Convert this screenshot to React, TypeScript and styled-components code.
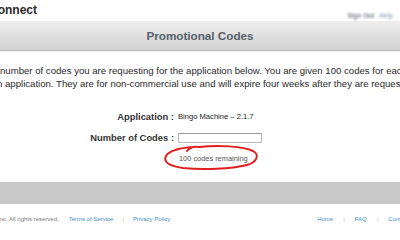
import React from 'react'
import styled, { createGlobalStyle } from 'styled-components'

const GlobalStyle = createGlobalStyle`
  html, body {
    margin: 0;
    padding: 0;
    background: #ffffff;
    overflow: hidden;
  }
  body {
    width: 400px;
    height: 240px;
    font-family: "Liberation Sans", Arial, sans-serif;
    color: #222;
  }
`

const Page = styled.div`
  display: flex;
  flex-direction: column;
  width: 400px;
  height: 240px;
  overflow: hidden;
`

const TopBar = styled.div`
  height: 21px;
  display: flex;
  align-items: center;
  justify-content: space-between;
`

const Brand = styled.div`
  margin-left: -11px;
  margin-top: -2px;
  font-size: 12px;
  font-weight: bold;
  color: #2b2b2b;
`

const UserLinks = styled.div`
  display: flex;
  gap: 5px;
  margin-right: 7px;
  margin-top: 9px;
  font-size: 6.4px;
  filter: blur(0.8px);
`

const UserLink = styled.span<{ tone: string }>`
  color: ${(p) => p.tone};
  font-weight: bold;
`

const Header = styled.div`
  height: 29px;
  display: flex;
  align-items: center;
  justify-content: center;
  background: linear-gradient(#eeeeee, #d2d2d2);
  border-bottom: 1px solid #bcbcbc;
  box-shadow: 0 1px 0 #f4f4f4;
`

const Title = styled.h1`
  margin: 0;
  font-size: 11.7px;
  font-weight: bold;
  color: #56606a;
`

const Intro = styled.div`
  padding-top: 13px;
  font-size: 9.6px;
  line-height: 13px;
  color: #2a2a2a;
`

const IntroLine = styled.div<{ shift: number }>`
  white-space: nowrap;
  margin-left: ${(p) => p.shift}px;
`

const Form = styled.div`
  margin-top: 20px;
  display: grid;
  grid-template-columns: 174px 1fr;
  column-gap: 4px;
  grid-auto-rows: 13px;
  row-gap: 8px;
  align-items: center;
`

const Label = styled.div`
  text-align: right;
  font-size: 9.4px;
  font-weight: bold;
  color: #333;
  white-space: nowrap;
`

const Value = styled.div`
  font-size: 7.6px;
  color: #222;
`

const CodeInput = styled.input`
  box-sizing: border-box;
  width: 84px;
  height: 10px;
  margin: 0;
  padding: 0;
  border: 1px solid #b9b9b9;
  border-top-color: #9a9a9a;
  background: #fff;
`

const Remaining = styled.div`
  position: relative;
  font-size: 7.4px;
  color: #555;
  padding-left: 1px;
`

const Circle = styled.svg`
  position: absolute;
  left: -15px;
  top: -10px;
  overflow: visible;
`

const Band = styled.div`
  margin-top: 17px;
  height: 22px;
  background: #c9c9c9;
`

const Footer = styled.div`
  flex: 1;
  display: flex;
  align-items: center;
  padding-bottom: 6px;
  font-size: 6px;
`

const FooterGroup = styled.div<{ end?: boolean }>`
  display: flex;
  align-items: center;
  margin-left: ${(p) => (p.end ? 'auto' : '0')};
  margin-right: ${(p) => (p.end ? '-18px' : '0')};
`

const Copy = styled.span`
  margin-left: -2px;
  margin-right: 10px;
  color: #7a7a7a;
`

const FootLink = styled.a`
  color: #3d8ed2;
  text-decoration: none;
  white-space: nowrap;
`

const Sep = styled.span<{ space: number }>`
  color: #c6c6c6;
  margin: 0 ${(p) => p.space}px;
`

export default function App() {
  return (
    <Page>
      <GlobalStyle />
      <TopBar>
        <Brand>Connect</Brand>
        <UserLinks>
          <UserLink tone="#7d8088">Sign Out</UserLink>
          <UserLink tone="#a8b0c8">Help</UserLink>
        </UserLinks>
      </TopBar>
      <Header>
        <Title>Promotional Codes</Title>
      </Header>
      <Intro>
        <IntroLine shift={0}>
          number of codes you are requesting for the application below. You are given 100 codes for each
        </IntroLine>
        <IntroLine shift={-3}>
          n application. They are for non-commercial use and will expire four weeks after they are requested.
        </IntroLine>
      </Intro>
      <Form>
        <Label>Application :</Label>
        <Value>Bingo Machine – 2.1.7</Value>
        <Label>Number of Codes :</Label>
        <div>
          <CodeInput type="text" />
        </div>
        <div />
        <Remaining>
          100 codes remaining
          <Circle width="96" height="28" viewBox="0 0 96 28">
            <path
              d="M24 7 C27 3 31 2 36 3 C55 1 80 2 90 7 C97 11 94 18 84 21 C68 25 40 26 20 24 C6 22 0 18 3 12 C6 7 16 4 30 3"
              fill="none"
              stroke="#e11f1f"
              strokeWidth="2"
              strokeLinecap="round"
            />
          </Circle>
        </Remaining>
      </Form>
      <Band />
      <Footer>
        <FooterGroup>
          <Copy>Inc. All rights reserved.</Copy>
          <FootLink href="#">Terms of Service</FootLink>
          <Sep space={9}>|</Sep>
          <FootLink href="#">Privacy Policy</FootLink>
        </FooterGroup>
        <FooterGroup end>
          <FootLink href="#">Home</FootLink>
          <Sep space={10}>|</Sep>
          <FootLink href="#">FAQ</FootLink>
          <Sep space={10}>|</Sep>
          <FootLink href="#">Contact Us</FootLink>
        </FooterGroup>
      </Footer>
    </Page>
  )
}
